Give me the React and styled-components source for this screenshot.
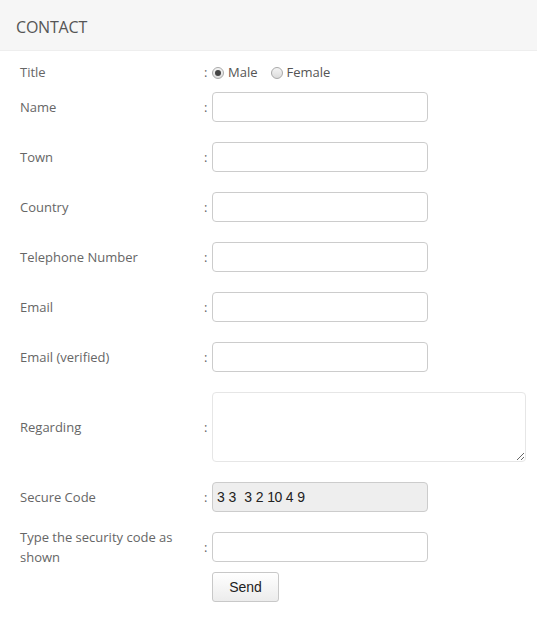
import React from 'react';
import styled, { createGlobalStyle } from 'styled-components';

const GlobalStyle = createGlobalStyle`
    html, body {
        margin: 0;
        padding: 0;
        background: #fff;
    }
    body {
        font-family: "Open Sans", "DejaVu Sans", sans-serif;
    }
`;

const Page = styled.div`
    width: 537px;
`;

const Header = styled.div`
    box-sizing: border-box;
    height: 51px;
    display: flex;
    align-items: center;
    padding: 3px 0 0 16px;
    background: #f6f6f6;
    border-bottom: 1px solid #eeeeee;
    color: #555;
    font-size: 16px;
    letter-spacing: -0.2px;
`;

const Form = styled.form`
    display: flex;
    flex-direction: column;
    padding: 11px 0 0 20px;
`;

const Row = styled.div`
    display: flex;
    align-items: center;
    min-height: ${p => p.$height || 30}px;
    margin-bottom: ${p => p.$gap ?? 20}px;
`;

const Label = styled.label`
    width: 166px;
    padding-right: 18px;
    font-size: 13px;
    line-height: 20px;
    color: #666;
`;

const Colon = styled.span`
    width: 8px;
    font-size: 13px;
    color: #666;
`;

const Input = styled.input`
    box-sizing: border-box;
    width: 216px;
    height: 30px;
    margin: 0;
    border: 1px solid #cccccc;
    border-radius: 4px;
    background: #fff;
    padding: 4px 6px;
    font-size: 14px;
    outline: none;
`;

const TextArea = styled.textarea`
    box-sizing: border-box;
    width: 314px;
    height: 70px;
    margin: 0;
    border: 1px solid #e6e6e6;
    border-radius: 4px;
    padding: 4px 6px;
    resize: both;
    outline: none;
`;

const CodeBox = styled.div`
    box-sizing: border-box;
    width: 216px;
    height: 30px;
    display: flex;
    align-items: center;
    padding-left: 4px;
    border: 1px solid #cccccc;
    border-radius: 4px;
    background: #eeeeee;
    color: #222;
    font-family: "Liberation Sans", Arial, sans-serif;
    font-size: 14px;
    letter-spacing: -0.6px;
    word-spacing: 1px;
    white-space: pre;
`;

const Radios = styled.div`
    display: flex;
    align-items: center;
    font-size: 13px;
    color: #555;
`;

const RadioLabel = styled.label`
    display: flex;
    align-items: center;
    margin-right: 13px;
`;

const Radio = styled.input`
    appearance: none;
    box-sizing: border-box;
    width: 12px;
    height: 12px;
    margin: 2px 4px 0 0;
    border: 1px solid #a9a9a9;
    border-radius: 50%;
    background: linear-gradient(#f4f4f4, #dcdcdc);
    position: relative;

    &:checked::after {
        content: '';
        position: absolute;
        left: 2px;
        top: 2px;
        width: 6px;
        height: 6px;
        border-radius: 50%;
        background: #444;
    }
`;

const Spacer = styled.div`
    width: 192px;
`;

const Button = styled.button`
    box-sizing: border-box;
    width: 67px;
    height: 30px;
    border: 1px solid #c8c8c8;
    border-radius: 3px;
    background: linear-gradient(#ffffff, #ececec);
    color: #222;
    font-family: "Liberation Sans", Arial, sans-serif;
    font-size: 14px;
    cursor: pointer;
`;

const fields = [
    'Name',
    'Town',
    'Country',
    'Telephone Number',
    'Email',
    'Email (verified)',
];

const App = () => {
    return (
        <Page>
            <GlobalStyle />
            <Header>CONTACT</Header>
            <Form onSubmit={e => e.preventDefault()}>
                <Row $height={20} $gap={10}>
                    <Label>Title</Label>
                    <Colon>:</Colon>
                    <Radios>
                        <RadioLabel>
                            <Radio type="radio" name="title" defaultChecked />
                            Male
                        </RadioLabel>
                        <RadioLabel>
                            <Radio type="radio" name="title" />
                            Female
                        </RadioLabel>
                    </Radios>
                </Row>
                {fields.map(f => (
                    <Row key={f}>
                        <Label>{f}</Label>
                        <Colon>:</Colon>
                        <Input type="text" />
                    </Row>
                ))}
                <Row $height={70}>
                    <Label>Regarding</Label>
                    <Colon>:</Colon>
                    <TextArea />
                </Row>
                <Row $gap={15}>
                    <Label>Secure Code</Label>
                    <Colon>:</Colon>
                    <CodeBox>3 3  3 2 10 4 9</CodeBox>
                </Row>
                <Row $height={40} $gap={5}>
                    <Label>Type the security code as shown</Label>
                    <Colon>:</Colon>
                    <Input type="text" />
                </Row>
                <Row>
                    <Spacer />
                    <Button type="submit">Send</Button>
                </Row>
            </Form>
        </Page>
    );
};

export default App;
